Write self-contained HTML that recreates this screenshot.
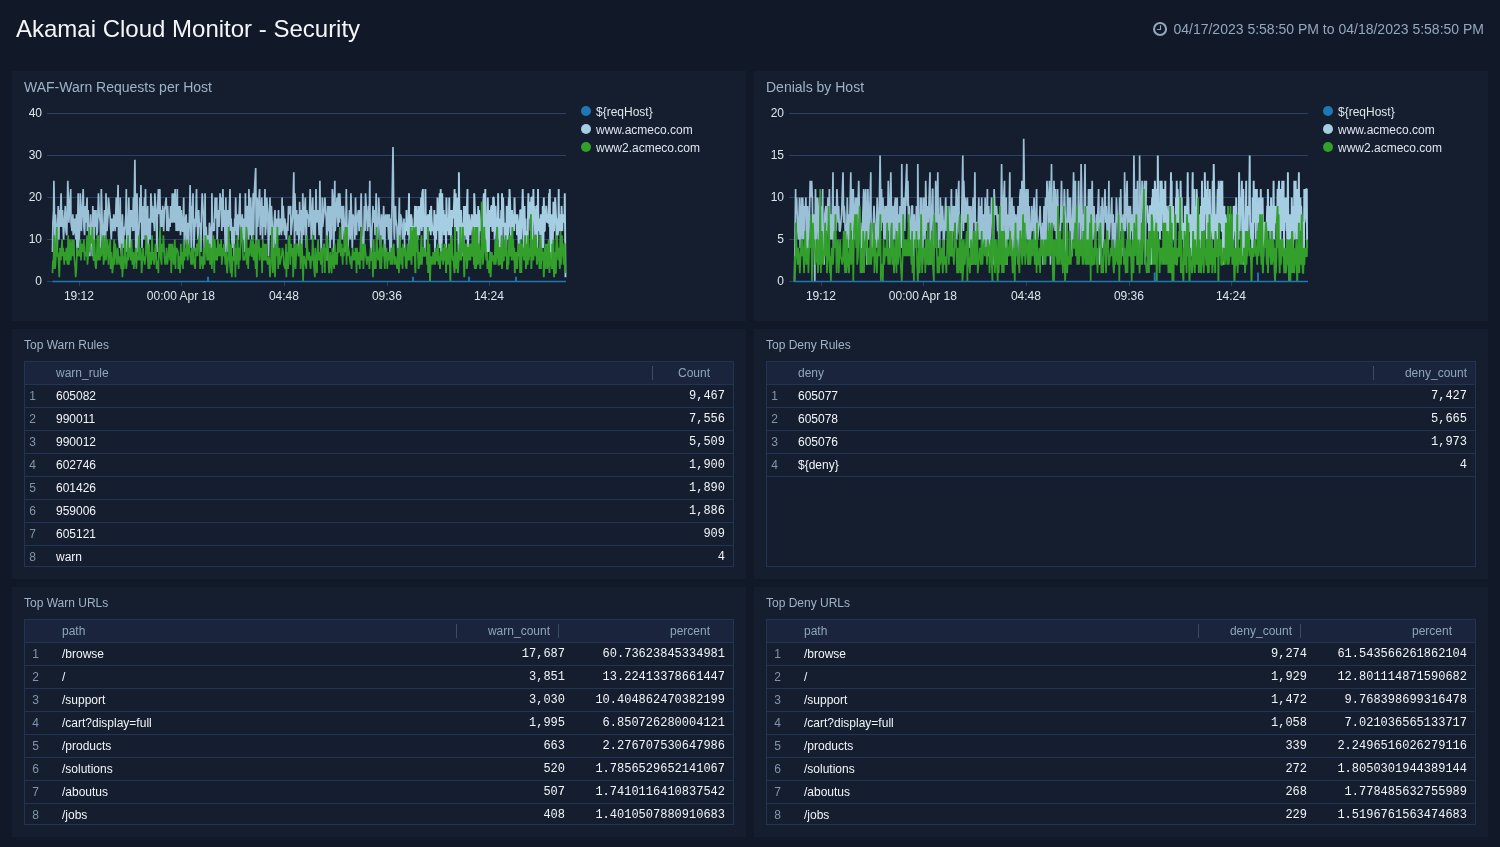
<!DOCTYPE html><html><head><meta charset="utf-8"><title>Akamai Cloud Monitor - Security</title><style>
*{box-sizing:border-box}
html,body{margin:0;padding:0}
body{width:1500px;height:847px;overflow:hidden;background:#111827;font-family:"Liberation Sans",sans-serif;position:relative;color:#f2f4f7}
#wrap{position:absolute;left:0;top:0;width:1500px;height:847px;will-change:transform}
.abs{position:absolute}
#title{left:16px;top:14px;font-size:24px;line-height:30px;color:#f4f6f9;white-space:nowrap}
#time{right:16px;top:20px;font-size:14px;line-height:18px;color:#93a7bd;white-space:nowrap}
#clock{left:1152px;top:21px}
.panel{position:absolute;background:#151e2f;width:734px;height:250px}
.pt{position:absolute;left:12px;white-space:nowrap;color:#9fb3c8}
.pt.big{top:8px;font-size:14px;line-height:16px}
.pt.sm{top:9px;font-size:12px;line-height:14px}
svg{position:absolute;left:0;top:0;overflow:visible}
svg text{font-family:"Liberation Sans",sans-serif;font-size:12px}
.tbl{position:absolute;left:12px;top:32px;width:710px;height:206px;border:1px solid #213456;overflow:hidden}
.row{position:absolute;left:0;width:708px;height:23px;border-bottom:1px solid #213456;font-size:12px;line-height:14px}
.row.h{background:#1a243c;color:#8fa5bd}
.row span{position:absolute;top:4px;white-space:nowrap}
.row .n{left:5px;color:#8095ac}
.row .m{font-family:"Liberation Mono","Liberation Sans",monospace;text-align:right}
.sep{position:absolute;top:4px;width:1px;height:14px;background:#3a4c69}
</style></head><body><div id="wrap"><div id="title" class="abs">Akamai Cloud Monitor - Security</div><svg id="clock" class="abs" width="16" height="16" viewBox="0 0 16 16" style="left:1152px;top:21px"><circle cx="8.05" cy="8" r="6" fill="none" stroke="#93a7bd" stroke-width="2.1"/><path d="M8.5 4.3V8.5H5" fill="none" stroke="#93a7bd" stroke-width="1.15"/></svg><div id="time" class="abs">04/17/2023 5:58:50 PM to 04/18/2023 5:58:50 PM</div><div class="panel" style="left:12px;top:71px"><div class="pt big">WAF-Warn Requests per Host</div><svg width="734" height="250" viewBox="12 71 734 250"><line x1="47" x2="566" y1="113.5" y2="113.5" stroke="#2c4064" stroke-width="1"/><text x="42" y="116.5" text-anchor="end" fill="#dfe5ec">40</text><line x1="47" x2="566" y1="155.5" y2="155.5" stroke="#2c4064" stroke-width="1"/><text x="42" y="158.5" text-anchor="end" fill="#dfe5ec">30</text><line x1="47" x2="566" y1="197.5" y2="197.5" stroke="#2c4064" stroke-width="1"/><text x="42" y="200.5" text-anchor="end" fill="#dfe5ec">20</text><line x1="47" x2="566" y1="239.5" y2="239.5" stroke="#2c4064" stroke-width="1"/><text x="42" y="242.5" text-anchor="end" fill="#dfe5ec">10</text><line x1="47" x2="566" y1="281.5" y2="281.5" stroke="#2c4064" stroke-width="1"/><text x="42" y="284.5" text-anchor="end" fill="#dfe5ec">0</text><line x1="79.5" x2="79.5" y1="281" y2="286" stroke="#2c4064" stroke-width="1"/><text x="78.9" y="300" text-anchor="middle" fill="#dfe5ec">19:12</text><line x1="181.5" x2="181.5" y1="281" y2="286" stroke="#2c4064" stroke-width="1"/><text x="180.9" y="300" text-anchor="middle" fill="#dfe5ec">00:00 Apr 18</text><line x1="284.5" x2="284.5" y1="281" y2="286" stroke="#2c4064" stroke-width="1"/><text x="283.9" y="300" text-anchor="middle" fill="#dfe5ec">04:48</text><line x1="387.5" x2="387.5" y1="281" y2="286" stroke="#2c4064" stroke-width="1"/><text x="386.9" y="300" text-anchor="middle" fill="#dfe5ec">09:36</text><line x1="489.5" x2="489.5" y1="281" y2="286" stroke="#2c4064" stroke-width="1"/><text x="488.9" y="300" text-anchor="middle" fill="#dfe5ec">14:24</text><path d="M52.5,252.1L52.9,222.7L53.6,210.1L53.9,180.7L55.0,247.9L55.4,214.3L56.8,235.3L57.1,256.3L58.2,205.9L58.9,239.5L59.3,210.1L60.0,226.9L61.1,193.3L61.8,226.9L62.5,210.1L63.6,239.5L63.9,231.1L65.3,205.9L66.0,231.1L66.8,235.3L67.1,218.5L67.8,180.7L68.9,222.7L69.6,205.9L70.7,189.1L71.0,222.7L72.1,231.1L72.8,214.3L73.2,235.3L74.6,218.5L75.0,231.1L76.0,239.5L76.4,214.3L77.1,256.3L78.2,193.3L78.9,247.9L80.0,218.5L80.3,193.3L81.4,231.1L81.7,222.7L83.2,189.1L83.9,226.9L84.6,235.3L85.3,205.9L85.7,222.7L87.1,197.5L87.4,231.1L88.1,210.1L89.2,239.5L89.9,256.3L90.6,214.3L91.4,235.3L92.4,256.3L92.8,205.9L93.9,260.5L94.2,210.1L94.9,226.9L96.0,210.1L96.7,235.3L97.4,231.1L98.5,193.3L99.2,214.3L100.3,222.7L100.6,247.9L101.3,189.1L102.1,218.5L103.1,252.1L104.2,218.5L104.5,210.1L105.6,247.9L106.0,193.3L107.0,231.1L108.1,214.3L108.5,197.5L109.5,210.1L110.3,218.5L110.6,226.9L111.3,239.5L112.0,218.5L113.1,231.1L113.8,214.3L114.9,226.9L115.2,231.1L116.3,197.5L116.7,226.9L118.1,184.9L118.5,235.3L119.5,247.9L120.2,197.5L120.9,247.9L121.7,256.3L122.4,214.3L123.1,247.9L124.2,226.9L124.5,235.3L125.9,214.3L126.3,189.1L127.0,252.1L128.1,226.9L128.8,197.5L129.9,256.3L130.6,210.1L130.9,226.9L131.6,210.1L132.7,231.1L133.4,197.5L133.8,231.1L134.9,159.7L135.9,260.5L136.3,235.3L137.0,193.3L137.7,252.1L139.1,226.9L139.8,197.5L140.6,222.7L140.9,184.9L142.0,247.9L143.1,205.9L143.8,239.5L144.5,197.5L144.8,235.3L145.5,189.1L146.3,239.5L147.7,205.9L148.0,256.3L148.8,222.7L149.5,218.5L150.2,239.5L150.9,193.3L152.3,222.7L152.7,205.9L153.4,214.3L154.5,231.1L154.8,193.3L156.2,214.3L157.0,252.1L157.3,218.5L158.4,189.1L159.1,214.3L159.8,189.1L160.5,226.9L161.2,210.1L161.9,226.9L162.7,205.9L163.7,231.1L164.4,210.1L165.2,205.9L166.2,197.5L166.9,231.1L167.6,205.9L168.7,231.1L169.1,218.5L170.1,226.9L170.5,205.9L171.6,222.7L172.3,193.3L172.6,222.7L174.1,193.3L174.4,222.7L175.1,189.1L176.2,231.1L177.3,189.1L177.6,231.1L178.7,205.9L179.4,231.1L180.1,205.9L180.5,235.3L181.2,210.1L182.3,231.1L183.0,231.1L183.7,197.5L184.4,247.9L185.5,218.5L186.2,214.3L186.9,247.9L187.6,222.7L188.3,252.1L189.4,218.5L190.1,184.9L191.2,247.9L191.9,205.9L192.2,214.3L193.0,193.3L193.7,252.1L195.1,218.5L195.5,226.9L196.5,189.1L196.9,210.1L198.0,239.5L198.7,210.1L199.4,226.9L200.1,222.7L200.8,252.1L201.5,214.3L202.2,193.3L203.3,214.3L204.4,252.1L205.1,193.3L205.4,235.3L206.2,226.9L207.2,256.3L207.9,235.3L209.0,247.9L209.4,222.7L210.4,231.1L211.5,260.5L211.9,193.3L212.6,231.1L213.3,222.7L214.3,231.1L215.1,197.5L215.4,218.5L216.8,197.5L217.2,239.5L217.9,210.1L219.0,226.9L220.1,193.3L220.8,210.1L221.1,197.5L221.8,231.1L222.9,189.1L223.6,226.9L224.3,210.1L225.4,252.1L225.8,197.5L226.5,226.9L227.5,252.1L227.9,210.1L228.6,231.1L230.0,189.1L230.7,231.1L231.1,218.5L232.2,247.9L233.2,226.9L234.0,260.5L234.7,218.5L235.0,231.1L235.7,197.5L236.5,235.3L237.9,214.3L238.2,239.5L239.3,210.1L240.0,193.3L240.4,222.7L241.4,235.3L242.2,214.3L242.9,239.5L243.6,218.5L244.7,252.1L245.4,193.3L246.1,252.1L246.8,210.1L247.5,205.9L248.6,239.5L248.9,189.1L250.4,235.3L250.7,197.5L251.8,239.5L252.1,231.1L253.2,193.3L253.6,235.3L254.3,193.3L255.7,168.1L256.4,260.5L257.1,197.5L257.8,226.9L258.6,205.9L259.6,189.1L260.3,235.3L260.7,218.5L261.8,197.5L262.5,239.5L263.2,205.9L264.3,226.9L265.0,189.1L265.3,235.3L266.0,226.9L266.8,197.5L267.8,214.3L268.5,256.3L269.6,210.1L270.0,197.5L270.7,235.3L271.4,205.9L272.5,231.1L273.2,260.5L274.2,222.7L275.0,210.1L275.7,247.9L276.7,218.5L277.1,226.9L277.8,235.3L278.5,210.1L279.2,235.3L280.3,218.5L281.4,235.3L282.1,197.5L282.4,231.1L283.2,205.9L284.6,235.3L284.9,218.5L285.6,231.1L286.4,239.5L287.4,222.7L287.8,231.1L288.5,205.9L289.6,214.3L290.6,205.9L291.0,235.3L292.1,222.7L292.8,214.3L293.8,172.3L294.6,252.1L294.9,193.3L296.0,231.1L296.7,210.1L297.1,235.3L298.1,214.3L299.2,252.1L299.6,201.7L300.3,231.1L301.0,210.1L301.7,247.9L302.8,193.3L303.8,235.3L304.5,214.3L305.3,197.5L306.3,247.9L306.7,210.1L307.8,218.5L308.5,214.3L308.8,226.9L309.5,214.3L310.2,189.1L311.3,239.5L312.4,205.9L312.7,197.5L313.5,235.3L314.5,210.1L315.2,239.5L316.0,189.1L316.7,222.7L317.4,218.5L318.1,210.1L319.2,235.3L319.9,180.7L320.6,235.3L321.3,252.1L322.4,197.5L322.7,226.9L324.2,210.1L324.9,197.5L325.6,210.1L326.3,218.5L327.0,260.5L327.7,205.9L328.8,231.1L329.1,205.9L330.2,247.9L330.9,205.9L331.6,239.5L332.4,189.1L333.4,205.9L333.8,252.1L334.8,180.7L335.2,231.1L336.3,210.1L337.0,197.5L338.1,226.9L338.4,193.3L339.5,222.7L339.8,193.3L340.9,218.5L341.6,205.9L342.3,239.5L343.4,205.9L344.1,218.5L344.8,252.1L345.9,222.7L346.3,189.1L347.0,226.9L348.0,247.9L348.4,235.3L349.5,210.1L350.2,239.5L350.9,193.3L351.6,218.5L352.3,247.9L353.0,214.3L354.5,222.7L354.8,239.5L355.5,197.5L356.6,235.3L356.9,222.7L358.4,210.1L359.1,231.1L359.8,210.1L360.2,226.9L361.2,193.3L361.9,235.3L363.0,247.9L363.4,260.5L364.4,205.9L365.1,231.1L365.5,193.3L366.9,218.5L367.6,231.1L368.4,205.9L369.1,226.9L369.8,180.7L370.1,222.7L371.2,260.5L371.9,231.1L373.0,205.9L373.3,222.7L374.4,210.1L375.1,235.3L376.2,193.3L376.6,226.9L377.6,239.5L378.0,226.9L378.7,197.5L380.1,231.1L380.5,252.1L381.5,214.3L381.9,226.9L382.6,239.5L383.7,205.9L384.8,260.5L385.1,222.7L385.8,214.3L386.9,226.9L387.6,214.3L388.7,239.5L389.4,214.3L390.1,256.3L390.8,218.5L391.2,252.1L391.9,214.3L393.0,147.1L394.0,231.1L394.4,239.5L395.5,205.9L395.8,218.5L396.9,226.9L397.9,256.3L398.7,226.9L399.4,197.5L399.7,256.3L400.4,214.3L401.5,218.5L402.6,239.5L402.9,231.1L404.0,218.5L404.7,247.9" fill="none" stroke="#a6cee3" stroke-width="1.7" stroke-opacity="0.93" stroke-linejoin="bevel"/><path d="M405.1,235.3L405.1,235.3L405.4,222.7L406.1,231.1L406.5,210.1L406.9,231.1L407.6,218.5L407.9,235.3L408.6,218.5L409.0,193.3L409.4,256.3L409.7,214.3L410.4,231.1L411.1,214.3L411.5,218.5L411.8,218.5L412.2,252.1L412.9,231.1L413.3,226.9L414.0,226.9L414.3,226.9L415.1,205.9L415.4,226.9L415.8,247.9L416.5,235.3L416.8,205.9L417.6,239.5L417.9,210.1L418.3,235.3L419.0,205.9L419.3,235.3L420.0,222.7L420.4,218.5L420.8,218.5L421.1,197.5L421.8,231.1L422.2,193.3L422.9,189.1L423.3,222.7L423.6,226.9L424.3,214.3L424.7,256.3L425.4,189.1L425.8,218.5L426.1,231.1L426.8,239.5L427.2,222.7L427.9,214.3L428.2,218.5L429.0,231.1L429.3,214.3L429.7,222.7L430.0,210.1L430.7,235.3L431.1,205.9L431.8,222.7L432.2,226.9L432.5,231.1L433.2,226.9L434.0,235.3L434.3,210.1L434.7,226.9L435.0,256.3L435.7,214.3L436.1,239.5L436.8,218.5L437.2,231.1L437.5,197.5L438.2,218.5L438.9,205.9L439.3,247.9L439.7,193.3L440.0,239.5L440.7,189.1L441.1,252.1L441.8,239.5L442.2,193.3L442.9,222.7L443.2,231.1L443.6,210.1L443.9,235.3L444.6,214.3L445.4,222.7L445.7,226.9L446.1,252.1L446.4,197.5L447.1,222.7L447.9,231.1L448.2,218.5L448.6,235.3L449.3,197.5L449.6,226.9L450.0,235.3L450.7,210.1L451.1,239.5L451.4,210.1L452.1,226.9L452.5,210.1L453.2,218.5L453.6,214.3L454.3,197.5L454.6,189.1L455.0,247.9L455.7,193.3L456.1,210.1L456.4,231.1L457.1,226.9L457.5,214.3L457.8,197.5L458.6,252.1L458.9,172.3L459.6,226.9L460.0,222.7L460.7,247.9L461.0,210.1L461.8,235.3L462.1,222.7L462.5,231.1L463.2,256.3L463.5,252.1L463.9,205.9L464.6,235.3L465.0,205.9L465.3,235.3L466.0,226.9L466.4,239.5L466.8,210.1L467.5,189.1L467.8,252.1L468.5,231.1L468.9,214.3L469.6,226.9L470.0,222.7L470.3,235.3L471.0,222.7L471.4,218.5L471.7,214.3L472.5,218.5L472.8,256.3L473.5,226.9L473.9,231.1L474.2,193.3L474.9,210.1L475.3,231.1L476.0,252.1L476.4,214.3L476.7,222.7L477.4,252.1L478.2,205.9L478.5,252.1L478.9,231.1L479.2,210.1L479.9,218.5L480.3,231.1L480.7,222.7L481.4,222.7L481.7,231.1L482.4,252.1L482.8,239.5L483.1,205.9L483.9,193.3L484.2,226.9L484.9,231.1L485.3,189.1L485.6,252.1L486.4,214.3L487.1,252.1L487.4,214.3L487.8,197.5L488.5,235.3L488.9,252.1L489.2,218.5L489.9,210.1L490.3,226.9L490.6,214.3L491.3,205.9L491.7,205.9L492.4,231.1L492.8,231.1L493.1,197.5L493.8,197.5L494.2,205.9L494.6,239.5L495.3,226.9L495.6,205.9L496.3,226.9L496.7,231.1L497.4,222.7L497.8,239.5L498.1,193.3L498.8,231.1L499.2,218.5L499.5,260.5L500.3,218.5L500.6,239.5L501.3,210.1L501.7,252.1L502.0,193.3L502.8,214.3L503.1,197.5L503.8,226.9L504.2,222.7L504.9,252.1L505.3,231.1L505.6,222.7L506.3,252.1L506.7,205.9L507.4,222.7L507.7,214.3L508.1,239.5L508.8,197.5L509.2,226.9L509.5,189.1L510.2,205.9L510.6,231.1L511.3,239.5L511.7,235.3L512.0,210.1L512.7,222.7L513.1,214.3L513.5,226.9L514.2,231.1L514.5,197.5L515.2,222.7L515.6,222.7L515.9,214.3L516.7,222.7L517.0,235.3L517.4,214.3L518.1,222.7L518.8,256.3L519.2,247.9L519.5,239.5L520.2,210.1L520.6,210.1L520.9,239.5L521.7,222.7L522.0,218.5L522.7,189.1L523.1,205.9L523.8,256.3L524.1,226.9L524.5,205.9L525.2,256.3L525.6,218.5L525.9,256.3L526.6,231.1L527.0,239.5L527.7,247.9L528.1,205.9L528.4,193.3L528.8,218.5L529.5,201.7L530.2,214.3L530.6,231.1L530.9,218.5L531.3,197.5L532.0,197.5L532.3,247.9L533.1,210.1L533.4,189.1L533.8,214.3L534.5,205.9L535.2,239.5L535.6,231.1L535.9,239.5L536.6,205.9L537.0,205.9L537.3,247.9L538.0,189.1L538.4,222.7L538.8,231.1L539.5,218.5L540.2,235.3L540.5,226.9L540.9,214.3L541.6,231.1L542.0,218.5L542.3,247.9L542.7,205.9L543.4,247.9L543.8,197.5L544.5,231.1L544.8,231.1L545.2,210.1L545.9,214.3L546.2,205.9L547.0,222.7L547.3,214.3L548.0,222.7L548.4,222.7L549.1,193.3L549.5,226.9L549.8,189.1L550.2,239.5L550.9,260.5L551.6,214.3L552.0,239.5L552.3,231.1L552.7,252.1L553.4,201.7L553.7,226.9L554.1,231.1L554.8,210.1L555.2,197.5L555.9,214.3L556.2,218.5L556.6,239.5L557.3,218.5L557.7,235.3L558.4,226.9L558.7,189.1L559.1,231.1L559.8,214.3L560.5,226.9L560.9,231.1L561.2,226.9L561.6,205.9L562.3,231.1L562.6,218.5L563.4,218.5L563.7,214.3L564.4,222.7L564.8,193.3L565.5,277.3" fill="none" stroke="#a6cee3" stroke-width="1.9" stroke-opacity="1.0" stroke-linejoin="bevel"/><path d="M52.5,273.1L52.9,260.5L53.2,268.9L54.3,235.3L55.0,268.9L55.7,260.5L56.8,226.9L57.1,256.3L57.8,252.1L58.6,260.5L59.3,277.3L60.0,247.9L60.7,260.5L62.1,239.5L62.5,256.3L63.2,247.9L64.3,264.7L64.6,252.1L65.7,260.5L66.4,247.9L67.5,264.7L68.2,235.3L68.9,264.7L70.0,239.5L70.7,260.5L71.4,252.1L72.1,239.5L72.5,256.3L73.9,239.5L74.2,256.3L75.3,268.9L75.7,277.3L76.4,268.9L77.1,247.9L77.8,252.1L79.2,256.3L79.6,247.9L80.3,239.5L81.0,260.5L81.7,243.7L82.8,252.1L83.9,239.5L84.6,260.5L84.9,252.1L86.0,256.3L87.1,235.3L87.4,264.7L88.5,252.1L89.2,226.9L89.6,252.1L90.3,235.3L91.7,243.7L92.4,226.9L93.1,252.1L93.5,260.5L94.6,239.5L95.3,264.7L96.0,268.9L96.7,256.3L97.4,235.3L98.1,260.5L98.8,235.3L99.9,260.5L100.6,247.9L101.3,256.3L102.4,247.9L103.1,235.3L103.5,264.7L104.5,256.3L105.3,235.3L106.0,260.5L106.7,247.9L107.4,239.5L108.5,264.7L109.2,247.9L110.3,239.5L110.6,268.9L111.3,252.1L112.4,273.1L113.1,264.7L114.2,239.5L114.5,264.7L115.2,243.7L116.0,252.1L117.0,264.7L117.7,247.9L118.8,260.5L119.2,264.7L119.9,256.3L121.3,268.9L121.7,243.7L122.4,277.3L123.4,256.3L123.8,268.9L124.9,239.5L125.6,260.5L126.3,268.9L127.4,256.3L128.1,235.3L128.4,260.5L129.5,247.9L130.6,256.3L130.9,260.5L131.6,239.5L132.4,264.7L133.4,252.1L133.8,268.9L134.9,256.3L135.9,247.9L136.3,268.9L137.0,256.3L137.7,260.5L139.1,235.3L139.5,260.5L140.6,247.9L141.3,260.5L141.6,273.1L143.1,247.9L143.4,260.5L144.1,256.3L144.8,264.7L145.5,256.3L146.3,235.3L147.3,252.1L148.4,268.9L149.1,243.7L149.5,268.9L150.5,252.1L151.2,264.7L152.0,235.3L153.0,260.5L153.4,252.1L154.1,264.7L155.5,243.7L155.9,247.9L156.6,268.9L157.7,260.5L158.4,273.1L158.7,256.3L160.2,226.9L160.5,256.3L161.6,264.7L161.9,243.7L163.0,252.1L163.4,235.3L164.4,256.3L165.2,264.7L166.2,256.3L166.6,247.9L167.3,264.7L168.7,252.1L169.1,243.7L170.1,260.5L170.9,243.7L171.2,273.1L172.3,243.7L173.4,260.5L173.7,264.7L174.8,239.5L175.5,268.9L175.8,256.3L176.6,247.9L178.0,252.1L178.3,268.9L179.4,256.3L180.1,273.1L180.8,243.7L181.6,264.7L182.6,252.1L183.0,268.9L183.7,239.5L184.4,260.5L185.1,247.9L186.2,256.3L187.3,239.5L187.6,260.5L188.3,252.1L189.4,243.7L189.8,252.1L191.2,264.7L191.9,247.9L192.2,264.7L193.3,247.9L193.7,260.5L195.1,268.9L195.8,247.9L196.5,256.3L196.9,243.7L197.6,256.3L198.3,243.7L199.4,235.3L200.1,268.9L200.8,260.5L201.5,256.3L202.9,268.9L203.7,247.9L204.0,260.5L204.7,264.7L205.4,235.3L206.5,247.9L207.2,260.5L207.9,239.5L208.6,260.5L209.7,243.7L210.1,264.7L211.1,247.9L211.9,268.9L212.6,247.9L213.3,235.3L214.3,273.1L214.7,239.5L215.8,260.5L216.5,247.9L217.2,260.5L217.9,239.5L219.0,256.3L220.1,243.7L220.8,256.3L221.1,239.5L221.8,264.7L222.9,247.9L223.3,256.3L224.0,243.7L225.4,264.7L226.1,252.1L226.8,268.9L227.2,273.1L228.3,252.1L228.6,226.9L229.7,260.5L230.7,273.1L231.1,243.7L231.8,277.3L232.9,256.3L234.0,260.5L234.7,243.7L235.4,277.3L235.7,247.9L236.5,264.7L237.5,235.3L238.6,268.9L239.3,247.9L240.0,260.5L240.4,247.9L241.1,226.9L242.5,243.7L243.2,260.5L243.6,256.3L244.7,260.5L245.4,252.1L246.4,226.9L246.8,264.7L247.5,247.9L248.2,268.9L248.9,247.9L249.6,256.3L250.7,239.5L251.8,256.3L252.1,256.3L252.9,235.3L253.6,260.5L254.3,243.7L255.7,268.9L256.1,239.5L256.8,277.3L257.5,252.1L258.9,239.5L259.6,260.5L260.3,247.9L260.7,252.1L261.4,247.9L262.1,273.1L262.8,239.5L263.9,260.5L264.6,243.7L265.3,260.5L266.0,243.7L267.1,260.5L267.8,264.7L268.9,256.3L269.3,260.5L270.0,277.3L271.0,260.5L272.1,226.9L272.8,273.1L273.2,264.7L273.9,247.9L275.0,277.3L276.0,243.7L276.4,256.3L277.4,226.9L278.2,268.9L278.5,252.1L279.6,247.9L279.9,264.7L281.4,256.3L281.7,256.3L282.4,247.9L283.2,252.1L283.9,264.7L285.3,268.9L286.0,243.7L286.4,277.3L287.1,252.1L288.1,268.9L288.5,239.5L289.6,235.3L290.3,264.7L291.0,243.7L291.7,256.3L292.8,247.9L293.1,277.3L294.6,243.7L294.9,260.5L295.6,268.9L296.3,252.1L297.1,243.7L298.5,256.3L299.2,252.1L299.9,239.5L300.6,268.9L301.0,256.3L302.0,243.7L303.1,281.5L303.8,256.3L304.2,256.3L304.9,260.5L306.3,268.9L307.0,235.3L307.4,247.9L308.5,260.5L309.2,252.1L309.5,256.3L310.6,268.9L311.3,256.3L312.0,260.5L312.7,235.3L313.5,260.5L314.9,277.3L315.2,247.9L316.0,260.5L317.0,273.1L317.4,252.1L318.1,239.5L318.8,260.5L319.9,252.1L320.9,264.7L321.7,247.9L322.4,273.1L322.7,252.1L324.2,243.7L324.9,273.1L325.2,247.9L326.3,260.5L326.6,235.3L328.1,247.9L328.4,260.5L329.1,273.1L330.2,252.1L330.6,260.5L331.6,273.1L332.4,247.9L333.1,260.5L334.1,268.9L334.8,243.7L335.2,264.7L336.3,252.1L337.0,264.7L338.1,239.5L338.8,252.1L339.1,252.1L339.8,226.9L340.9,256.3L341.6,243.7L342.7,264.7L343.0,247.9L343.8,256.3L344.5,239.5L345.5,226.9L346.6,264.7L347.0,226.9L347.7,256.3L348.4,247.9L349.1,252.1L350.5,264.7L350.9,256.3L351.6,268.9L352.7,247.9L353.4,260.5L354.1,252.1L355.2,260.5L355.5,247.9L356.6,273.1L356.9,247.9L358.0,264.7L359.1,252.1L359.8,268.9L360.2,252.1L361.2,226.9L361.6,260.5L363.0,243.7L363.4,268.9L364.1,247.9L364.8,243.7L365.5,252.1L366.9,264.7L367.3,256.3L368.0,260.5L368.7,256.3L369.4,268.9L370.5,247.9L371.6,260.5L372.3,252.1L373.0,277.3L373.7,239.5L374.4,268.9L375.5,252.1L375.8,268.9L376.6,226.9L377.3,252.1L378.0,260.5L379.4,247.9L380.1,268.9L380.8,235.3L381.2,268.9L382.3,247.9L382.6,256.3L383.7,243.7L384.8,268.9L385.5,252.1L385.8,260.5L386.5,247.9L387.3,268.9L388.3,252.1L389.4,260.5L389.7,252.1L390.5,264.7L391.2,247.9L392.2,264.7L393.0,247.9L393.7,243.7L394.4,264.7L395.5,256.3L395.8,260.5L397.2,268.9L397.9,247.9L398.3,260.5L399.0,273.1L399.7,235.3L401.2,264.7L401.9,247.9L402.6,268.9L402.9,243.7L404.0,256.3L405.1,247.9" fill="none" stroke="#33a02c" stroke-width="1.7" stroke-opacity="0.99" stroke-linejoin="bevel"/><path d="M405.1,247.9L405.1,247.9L405.4,256.3L405.8,264.7L406.5,268.9L406.9,260.5L407.6,243.7L407.9,260.5L408.6,247.9L409.0,247.9L409.4,260.5L410.1,239.5L410.4,252.1L410.8,226.9L411.5,264.7L411.8,243.7L412.2,231.1L412.9,256.3L413.3,226.9L414.0,235.3L414.3,235.3L415.1,264.7L415.4,273.1L415.8,226.9L416.5,247.9L416.8,252.1L417.2,235.3L417.9,252.1L418.3,260.5L418.6,268.9L419.3,260.5L419.7,252.1L420.4,264.7L420.8,252.1L421.5,235.3L421.8,264.7L422.2,256.3L422.9,247.9L423.3,247.9L424.0,256.3L424.3,247.9L424.7,252.1L425.4,256.3L425.8,252.1L426.1,256.3L426.8,252.1L427.2,264.7L427.9,226.9L428.2,273.1L428.6,252.1L429.3,243.7L429.7,260.5L430.0,281.5L430.7,256.3L431.1,264.7L431.8,260.5L432.2,256.3L432.9,264.7L433.2,252.1L434.0,256.3L434.3,256.3L434.7,252.1L435.0,264.7L435.7,247.9L436.1,256.3L436.8,260.5L437.2,260.5L437.5,252.1L438.2,243.7L438.6,264.7L439.3,260.5L439.7,256.3L440.0,268.9L440.7,252.1L441.1,252.1L441.8,256.3L442.2,260.5L442.5,243.7L443.2,264.7L443.6,247.9L443.9,256.3L444.6,260.5L445.0,243.7L445.7,252.1L446.1,273.1L446.4,247.9L447.1,256.3L447.9,264.7L448.2,260.5L448.6,247.9L448.9,243.7L449.6,252.1L450.4,281.5L450.7,247.9L451.1,239.5L451.8,235.3L452.1,252.1L452.8,260.5L453.2,260.5L453.6,256.3L453.9,264.7L454.6,273.1L455.0,226.9L455.3,247.9L456.1,268.9L456.8,252.1L457.1,268.9L457.5,252.1L457.8,273.1L458.6,260.5L458.9,256.3L459.6,243.7L460.0,260.5L460.3,226.9L461.0,260.5L461.8,243.7L462.1,252.1L462.5,247.9L462.8,226.9L463.5,247.9L464.3,277.3L464.6,256.3L465.0,260.5L465.3,243.7L466.0,247.9L466.4,243.7L466.8,268.9L467.5,260.5L467.8,247.9L468.5,247.9L468.9,260.5L469.6,243.7L470.0,247.9L470.3,260.5L471.0,247.9L471.4,243.7L471.7,252.1L472.5,256.3L472.8,235.3L473.5,226.9L473.9,264.7L474.2,256.3L474.9,268.9L475.7,226.9L476.0,268.9L476.4,252.1L476.7,256.3L477.4,226.9L477.8,264.7L478.5,260.5L478.9,243.7L479.6,252.1L479.9,256.3L480.3,268.9L480.7,256.3L481.4,252.1L481.7,201.7L482.4,247.9L482.8,264.7L483.5,256.3L483.9,247.9L484.2,226.9L484.9,247.9L485.3,239.5L486.0,256.3L486.4,260.5L487.1,252.1L487.4,268.9L487.8,260.5L488.1,268.9L488.9,264.7L489.2,273.1L489.9,252.1L490.3,252.1L490.6,277.3L491.3,260.5L491.7,252.1L492.4,260.5L492.8,260.5L493.1,256.3L493.8,256.3L494.2,264.7L494.9,256.3L495.3,239.5L495.6,264.7L496.3,256.3L496.7,247.9L497.1,226.9L497.8,252.1L498.5,264.7L498.8,264.7L499.2,264.7L499.5,247.9L500.3,247.9L501.0,264.7L501.3,247.9L501.7,235.3L502.0,268.9L502.8,247.9L503.5,260.5L503.8,260.5L504.2,239.5L504.9,256.3L505.3,252.1L505.6,235.3L506.0,247.9L506.7,252.1L507.0,268.9L507.7,268.9L508.1,256.3L508.5,264.7L509.2,235.3L509.5,252.1L510.2,252.1L510.6,256.3L511.3,235.3L511.7,260.5L512.4,226.9L512.7,243.7L513.1,239.5L513.8,260.5L514.2,247.9L514.9,273.1L515.2,252.1L515.6,256.3L516.3,260.5L516.7,252.1L517.0,268.9L517.7,256.3L518.1,247.9L518.8,243.7L519.2,252.1L519.5,243.7L520.2,273.1L520.6,239.5L521.3,273.1L521.7,252.1L522.0,243.7L522.4,252.1L523.1,256.3L523.4,247.9L524.1,260.5L524.5,247.9L525.2,235.3L525.6,247.9L525.9,268.9L526.6,252.1L527.0,243.7L527.7,264.7L528.1,235.3L528.4,247.9L528.8,260.5L529.5,247.9L529.9,256.3L530.6,247.9L530.9,214.3L531.3,268.9L532.0,247.9L532.3,239.5L533.1,243.7L533.4,260.5L533.8,235.3L534.5,256.3L535.2,243.7L535.6,235.3L535.9,235.3L536.6,256.3L537.0,264.7L537.3,256.3L538.0,247.9L538.4,260.5L538.8,247.9L539.5,268.9L540.2,235.3L540.5,256.3L540.9,268.9L541.6,247.9L542.0,252.1L542.3,252.1L542.7,260.5L543.4,252.1L543.8,277.3L544.5,252.1L544.8,247.9L545.2,268.9L545.9,243.7L546.2,256.3L547.0,243.7L547.3,268.9L547.7,260.5L548.4,252.1L548.7,239.5L549.5,273.1L549.8,252.1L550.2,260.5L550.9,264.7L551.2,260.5L552.0,268.9L552.3,243.7L553.0,252.1L553.4,239.5L553.7,260.5L554.1,277.3L554.8,252.1L555.2,273.1L555.9,273.1L556.2,247.9L556.6,235.3L557.3,243.7L558.0,256.3L558.4,260.5L558.7,256.3L559.1,247.9L559.8,268.9L560.5,231.1L560.9,264.7L561.2,256.3L561.9,235.3L562.3,256.3L562.6,247.9L563.4,256.3L563.7,264.7L564.1,243.7L564.8,243.7L565.1,273.1" fill="none" stroke="#33a02c" stroke-width="1.9" stroke-opacity="1.0" stroke-linejoin="bevel"/><path d="M52.5,281.5L207.7,281.5L207.7,277.3L208.3,277.3L208.3,281.5L412.7,281.5L412.7,277.3L413.3,277.3L413.3,281.5L468.7,281.5L468.7,277.3L469.3,277.3L469.3,281.5L515.7,281.5L515.7,277.3L516.3,277.3L516.3,281.5L566.0,281.5" fill="none" stroke="#1f78b4" stroke-width="1.3" stroke-linejoin="miter"/><circle cx="586" cy="111" r="5" fill="#1f78b4"/><text x="596" y="116" fill="#dfe5ec">${reqHost}</text><circle cx="586" cy="129" r="5" fill="#a6cee3"/><text x="596" y="134" fill="#dfe5ec">www.acmeco.com</text><circle cx="586" cy="147" r="5" fill="#33a02c"/><text x="596" y="152" fill="#dfe5ec">www2.acmeco.com</text></svg></div><div class="panel" style="left:754px;top:71px"><div class="pt big">Denials by Host</div><svg width="734" height="250" viewBox="754 71 734 250"><line x1="789" x2="1308" y1="113.5" y2="113.5" stroke="#2c4064" stroke-width="1"/><text x="784" y="116.5" text-anchor="end" fill="#dfe5ec">20</text><line x1="789" x2="1308" y1="155.5" y2="155.5" stroke="#2c4064" stroke-width="1"/><text x="784" y="158.5" text-anchor="end" fill="#dfe5ec">15</text><line x1="789" x2="1308" y1="197.5" y2="197.5" stroke="#2c4064" stroke-width="1"/><text x="784" y="200.5" text-anchor="end" fill="#dfe5ec">10</text><line x1="789" x2="1308" y1="239.5" y2="239.5" stroke="#2c4064" stroke-width="1"/><text x="784" y="242.5" text-anchor="end" fill="#dfe5ec">5</text><line x1="789" x2="1308" y1="281.5" y2="281.5" stroke="#2c4064" stroke-width="1"/><text x="784" y="284.5" text-anchor="end" fill="#dfe5ec">0</text><line x1="821.5" x2="821.5" y1="281" y2="286" stroke="#2c4064" stroke-width="1"/><text x="820.9" y="300" text-anchor="middle" fill="#dfe5ec">19:12</text><line x1="923.5" x2="923.5" y1="281" y2="286" stroke="#2c4064" stroke-width="1"/><text x="922.9" y="300" text-anchor="middle" fill="#dfe5ec">00:00 Apr 18</text><line x1="1026.5" x2="1026.5" y1="281" y2="286" stroke="#2c4064" stroke-width="1"/><text x="1025.9" y="300" text-anchor="middle" fill="#dfe5ec">04:48</text><line x1="1129.5" x2="1129.5" y1="281" y2="286" stroke="#2c4064" stroke-width="1"/><text x="1128.9" y="300" text-anchor="middle" fill="#dfe5ec">09:36</text><line x1="1231.5" x2="1231.5" y1="281" y2="286" stroke="#2c4064" stroke-width="1"/><text x="1230.9" y="300" text-anchor="middle" fill="#dfe5ec">14:24</text><path d="M794.5,281.5L794.9,247.9L795.6,189.1L795.9,214.3L796.6,197.5L797.4,222.7L798.4,239.5L799.5,197.5L800.2,247.9L800.6,231.1L801.6,197.5L802.3,239.5L802.7,197.5L804.1,239.5L804.5,205.9L805.2,214.3L805.9,197.5L806.6,256.3L807.7,205.9L808.4,247.9L809.1,231.1L810.2,180.7L810.5,197.5L811.6,180.7L812.3,197.5L813.0,247.9L813.8,214.3L814.8,281.5L815.5,189.1L816.2,239.5L817.3,197.5L818.0,214.3L818.4,264.7L819.5,197.5L820.5,247.9L820.9,205.9L821.6,239.5L822.7,189.1L823.0,247.9L824.1,264.7L824.8,214.3L825.9,205.9L826.2,239.5L826.9,231.1L828.0,197.5L828.7,222.7L829.4,189.1L830.1,239.5L830.9,214.3L831.9,239.5L833.0,172.3L833.4,247.9L834.4,205.9L835.1,239.5L835.5,205.9L836.2,231.1L836.9,189.1L838.3,222.7L838.7,205.9L839.4,231.1L840.1,231.1L841.6,214.3L841.9,205.9L843.0,172.3L843.7,222.7L844.1,205.9L844.8,214.3L845.5,247.9L846.9,222.7L847.3,197.5L848.3,247.9L848.7,214.3L849.4,239.5L850.8,172.3L851.5,231.1L852.3,189.1L852.6,256.3L853.3,189.1L854.0,239.5L855.5,197.5L856.2,231.1L856.9,197.5L857.6,239.5L858.0,205.9L858.7,180.7L860.1,239.5L860.5,222.7L861.2,239.5L861.9,264.7L862.6,222.7L863.7,189.1L864.4,256.3L865.1,197.5L865.8,189.1L866.9,264.7L867.9,189.1L868.7,239.5L869.4,214.3L869.7,214.3L870.8,172.3L871.1,231.1L872.6,256.3L873.3,222.7L874.0,205.9L874.4,214.3L875.1,231.1L876.1,247.9L877.2,197.5L877.9,222.7L878.3,247.9L879.0,231.1L880.1,155.5L881.1,231.1L881.5,189.1L882.2,222.7L882.9,197.5L884.0,239.5L885.1,205.9L885.4,239.5L886.1,222.7L886.8,205.9L887.5,231.1L888.3,180.7L889.7,247.9L890.0,222.7L890.8,172.3L891.5,214.3L892.5,256.3L892.9,205.9L894.0,239.5L894.7,205.9L895.4,197.5L896.5,256.3L897.2,197.5L898.2,239.5L899.0,214.3L899.3,256.3L900.0,205.9L901.1,247.9L901.8,163.9L902.5,239.5L903.2,231.1L903.9,197.5L904.7,231.1L905.4,197.5L906.8,163.9L907.2,205.9L907.9,180.7L908.6,222.7L909.3,205.9L910.7,247.9L911.1,239.5L911.8,205.9L912.5,205.9L913.2,256.3L914.3,214.3L914.6,239.5L915.7,247.9L916.4,205.9L917.5,239.5L917.8,163.9L918.6,247.9L920.0,222.7L920.3,197.5L921.1,231.1L921.8,197.5L922.5,264.7L923.9,197.5L924.3,214.3L925.0,239.5L925.7,180.7L926.8,231.1L927.5,205.9L928.2,222.7L928.9,205.9L930.0,172.3L930.3,264.7L931.0,231.1L932.5,189.1L932.8,189.1L933.5,256.3L934.6,214.3L935.3,222.7L935.7,180.7L937.1,222.7L937.8,172.3L938.5,247.9L939.2,214.3L939.6,247.9L940.3,197.5L941.4,231.1L942.4,205.9L943.2,222.7L943.5,256.3L944.9,222.7L945.7,197.5L946.4,231.1L947.1,214.3L947.4,205.9L948.5,247.9L948.9,205.9L950.3,256.3L950.6,231.1L951.4,189.1L952.1,256.3L953.1,205.9L954.2,231.1L954.9,205.9L955.6,222.7L956.3,189.1L956.7,239.5L957.4,214.3L958.8,180.7L959.2,231.1L960.3,239.5L960.6,222.7L961.3,239.5L962.8,155.5L963.5,231.1L963.8,180.7L964.9,222.7L965.3,197.5L966.0,222.7L967.4,197.5L967.8,214.3L968.5,231.1L969.2,205.9L969.9,247.9L971.0,205.9L971.7,264.7L972.7,214.3L973.1,197.5L974.2,222.7L974.9,172.3L975.6,264.7L976.3,222.7L977.0,222.7L978.1,231.1L978.8,197.5L979.2,239.5L980.2,205.9L980.9,239.5L981.7,197.5L982.7,247.9L983.4,214.3L984.2,247.9L985.2,197.5L985.9,247.9L986.7,222.7L987.4,189.1L988.1,256.3L988.8,205.9L989.9,247.9L990.6,214.3L990.9,222.7L991.6,197.5L992.7,247.9L993.4,264.7L994.1,189.1L995.2,214.3L995.6,214.3L996.6,205.9L997.7,231.1L998.1,214.3L998.8,239.5L999.5,214.3L1000.6,239.5L1001.6,163.9L1002.3,214.3L1002.7,256.3L1003.4,205.9L1004.5,180.7L1005.2,264.7L1006.3,197.5L1007.0,264.7L1007.3,214.3L1008.0,239.5L1009.1,214.3L1009.8,172.3L1010.5,247.9L1011.3,214.3L1012.0,197.5L1012.7,256.3L1013.7,205.9L1014.8,222.7L1015.2,264.7L1015.9,214.3L1017.0,247.9L1018.0,205.9L1018.4,214.3L1019.4,256.3L1019.8,197.5L1020.5,189.1L1021.2,239.5L1021.9,180.7L1023.0,247.9L1023.7,138.7L1024.8,222.7L1025.2,239.5L1026.2,189.1L1027.3,239.5L1028.0,189.1L1028.7,264.7L1029.1,205.9L1029.8,247.9L1030.9,231.1L1031.6,205.9L1032.6,231.1L1033.0,222.7L1034.1,197.5L1034.8,247.9L1035.8,222.7L1036.6,189.1L1036.9,214.3L1037.6,239.5L1038.3,231.1L1039.8,214.3L1040.1,205.9L1040.8,231.1L1041.6,247.9L1042.6,222.7L1043.0,264.7L1044.0,205.9L1044.8,247.9L1045.5,197.5L1046.2,247.9L1046.9,180.7L1048.3,205.9L1048.7,239.5L1049.4,180.7L1050.5,264.7L1050.8,222.7L1051.5,163.9L1052.2,231.1L1053.3,222.7L1054.0,180.7L1055.1,231.1L1055.5,189.1L1056.5,239.5L1057.6,189.1L1058.3,222.7L1058.7,231.1L1059.4,256.3L1060.4,231.1L1061.5,180.7L1062.2,222.7L1062.6,205.9L1063.7,214.3L1064.4,189.1L1065.4,222.7L1065.8,247.9L1066.5,256.3L1067.6,189.1L1068.3,222.7L1068.6,197.5L1070.1,231.1L1070.4,197.5L1071.5,239.5L1072.2,256.3L1072.6,222.7L1073.6,172.3L1074.4,239.5L1075.4,180.7L1075.8,231.1L1076.5,222.7L1077.6,247.9L1078.6,180.7L1079.3,222.7L1080.1,205.9L1080.4,247.9L1081.1,163.9L1082.6,239.5L1083.3,214.3L1083.6,247.9L1084.3,205.9L1085.0,163.9L1085.8,247.9L1086.8,205.9L1087.5,256.3L1088.6,189.1L1089.3,247.9L1090.0,231.1L1090.4,189.1L1091.5,247.9L1092.2,180.7L1092.9,239.5L1094.0,205.9L1094.3,222.7L1095.4,239.5L1096.5,214.3L1097.2,231.1L1097.5,222.7L1098.6,189.1L1098.9,205.9L1099.7,264.7L1101.1,205.9L1101.4,256.3L1102.2,197.5L1102.9,247.9L1103.9,214.3L1105.0,189.1L1105.7,222.7L1106.4,205.9L1107.1,231.1L1107.9,247.9L1108.9,180.7L1109.3,239.5L1110.4,214.3L1110.7,222.7L1111.8,197.5L1112.5,256.3L1113.2,214.3L1113.9,239.5L1114.6,222.7L1115.3,256.3L1116.4,197.5L1117.5,222.7L1117.8,214.3L1118.9,256.3L1119.6,197.5L1120.3,231.1L1120.7,189.1L1121.8,256.3L1122.5,222.7L1123.2,214.3L1124.3,231.1L1124.6,172.3L1125.3,231.1L1126.8,189.1L1127.1,180.7L1127.8,239.5L1128.5,205.9L1130.0,256.3L1130.3,205.9L1131.4,231.1L1132.1,214.3L1132.5,231.1L1133.2,256.3L1133.9,155.5L1135.3,247.9L1136.0,189.1L1136.7,239.5L1137.5,180.7L1137.8,264.7L1139.2,231.1L1139.6,155.5L1140.7,256.3L1141.0,231.1L1142.1,180.7L1143.2,205.9L1143.5,222.7L1144.6,180.7L1145.3,264.7L1145.7,222.7L1146.4,180.7" fill="none" stroke="#a6cee3" stroke-width="1.7" stroke-opacity="0.93" stroke-linejoin="bevel"/><path d="M1147.1,205.9L1147.1,205.9L1147.4,205.9L1148.1,222.7L1148.5,222.7L1148.9,214.3L1149.2,256.3L1149.9,205.9L1150.3,205.9L1151.0,264.7L1151.4,222.7L1152.1,197.5L1152.4,239.5L1152.8,189.1L1153.5,205.9L1153.8,239.5L1154.2,214.3L1154.9,180.7L1155.6,197.5L1156.0,205.9L1156.3,256.3L1156.7,189.1L1157.4,231.1L1157.8,155.5L1158.5,231.1L1158.8,231.1L1159.6,214.3L1159.9,239.5L1160.3,180.7L1160.6,222.7L1161.3,231.1L1161.7,180.7L1162.4,214.3L1162.8,205.9L1163.1,189.1L1163.8,239.5L1164.2,189.1L1164.9,222.7L1165.3,180.7L1165.6,222.7L1166.3,239.5L1166.7,205.9L1167.4,214.3L1167.8,222.7L1168.1,247.9L1168.8,231.1L1169.2,205.9L1169.9,205.9L1170.2,222.7L1171.0,172.3L1171.3,231.1L1171.7,180.7L1172.0,239.5L1172.7,222.7L1173.1,205.9L1173.8,239.5L1174.2,222.7L1174.5,239.5L1175.2,247.9L1176.0,197.5L1176.3,222.7L1176.7,180.7L1177.4,222.7L1177.7,189.1L1178.4,222.7L1178.8,197.5L1179.2,205.9L1179.9,231.1L1180.2,214.3L1180.6,180.7L1181.3,222.7L1181.7,197.5L1182.0,231.1L1182.7,239.5L1183.1,231.1L1183.8,222.7L1184.2,264.7L1184.9,205.9L1185.2,214.3L1185.6,205.9L1185.9,264.7L1186.6,222.7L1187.4,197.5L1187.7,172.3L1188.1,214.3L1188.4,197.5L1189.1,231.1L1189.5,231.1L1190.2,222.7L1190.6,214.3L1190.9,247.9L1191.6,256.3L1192.4,189.1L1192.7,172.3L1193.1,256.3L1193.4,205.9L1194.1,189.1L1194.5,247.9L1195.2,205.9L1195.6,247.9L1195.9,231.1L1196.6,189.1L1197.0,197.5L1197.3,256.3L1198.1,247.9L1198.4,231.1L1199.1,247.9L1199.5,214.3L1200.2,256.3L1200.6,239.5L1200.9,205.9L1201.6,231.1L1202.0,180.7L1202.3,222.7L1203.0,197.5L1203.4,256.3L1204.1,247.9L1204.5,231.1L1204.8,172.3L1205.5,214.3L1205.9,205.9L1206.6,189.1L1207.0,239.5L1207.7,180.7L1208.0,231.1L1208.4,231.1L1208.8,197.5L1209.5,247.9L1209.8,189.1L1210.5,239.5L1210.9,231.1L1211.2,214.3L1212.0,231.1L1212.7,180.7L1213.0,239.5L1213.4,214.3L1213.7,163.9L1214.5,205.9L1215.2,239.5L1215.5,256.3L1215.9,239.5L1216.6,214.3L1216.9,222.7L1217.7,189.1L1218.0,239.5L1218.4,214.3L1218.7,180.7L1219.4,197.5L1219.8,222.7L1220.5,222.7L1220.9,180.7L1221.6,231.1L1221.9,231.1L1222.3,180.7L1222.7,231.1L1223.4,264.7L1223.7,222.7L1224.4,205.9L1224.8,247.9L1225.1,214.3L1225.9,222.7L1226.2,247.9L1226.9,247.9L1227.3,231.1L1227.6,214.3L1228.4,222.7L1229.1,214.3L1229.4,222.7L1229.8,231.1L1230.1,222.7L1230.9,256.3L1231.2,239.5L1231.9,247.9L1232.3,239.5L1232.6,247.9L1233.3,231.1L1233.7,205.9L1234.4,231.1L1234.8,214.3L1235.1,205.9L1235.8,256.3L1236.2,197.5L1236.9,239.5L1237.3,214.3L1237.6,256.3L1238.3,231.1L1238.7,239.5L1239.1,172.3L1239.8,231.1L1240.5,197.5L1240.8,214.3L1241.2,214.3L1241.9,180.7L1242.3,256.3L1242.6,214.3L1243.3,189.1L1243.7,214.3L1244.0,264.7L1244.8,231.1L1245.1,247.9L1245.8,214.3L1246.2,180.7L1246.5,256.3L1247.3,222.7L1247.6,239.5L1248.0,205.9L1248.7,214.3L1249.0,214.3L1249.7,155.5L1250.1,222.7L1250.5,231.1L1251.2,239.5L1251.9,222.7L1252.2,256.3L1252.6,197.5L1253.0,247.9L1253.7,180.7L1254.0,214.3L1254.7,222.7L1255.1,189.1L1255.8,239.5L1256.2,197.5L1256.9,189.1L1257.2,222.7L1257.6,205.9L1258.3,231.1L1258.7,239.5L1259.0,197.5L1259.4,239.5L1260.1,239.5L1260.8,189.1L1261.2,239.5L1261.5,222.7L1261.9,247.9L1262.6,197.5L1263.3,256.3L1263.7,222.7L1264.0,239.5L1264.4,222.7L1265.1,222.7L1265.4,239.5L1266.1,247.9L1266.5,231.1L1267.2,205.9L1267.6,214.3L1267.9,189.1L1268.6,231.1L1269.0,205.9L1269.4,231.1L1270.1,222.7L1270.4,239.5L1271.1,197.5L1271.5,247.9L1271.9,214.3L1272.6,205.9L1272.9,231.1L1273.6,180.7L1274.0,239.5L1274.3,222.7L1275.1,222.7L1275.4,205.9L1276.1,222.7L1276.5,214.3L1276.8,247.9L1277.6,189.1L1277.9,231.1L1278.6,189.1L1279.0,180.7L1279.3,197.5L1280.0,239.5L1280.4,247.9L1280.8,189.1L1281.5,231.1L1282.2,180.7L1282.5,231.1L1282.9,214.3L1283.6,180.7L1284.0,256.3L1284.3,197.5L1285.0,222.7L1285.4,214.3L1285.8,197.5L1286.5,231.1L1286.8,205.9L1287.2,239.5L1287.9,172.3L1288.6,256.3L1289.0,231.1L1289.3,214.3L1290.0,239.5L1290.4,214.3L1291.1,231.1L1291.5,231.1L1291.8,197.5L1292.5,239.5L1292.9,264.7L1293.6,205.9L1294.0,239.5L1294.3,180.7L1295.0,231.1L1295.4,231.1L1295.7,180.7L1296.1,239.5L1296.8,231.1L1297.5,189.1L1297.9,239.5L1298.2,214.3L1298.9,172.3L1299.3,239.5L1299.7,205.9L1300.4,197.5L1300.7,231.1L1301.1,205.9L1301.8,222.7L1302.2,239.5L1302.9,222.7L1303.2,222.7L1303.9,264.7L1304.3,189.1L1304.6,222.7L1305.4,214.3L1305.7,197.5L1306.1,189.1L1306.8,189.1L1307.1,247.9" fill="none" stroke="#a6cee3" stroke-width="1.9" stroke-opacity="1.0" stroke-linejoin="bevel"/><path d="M794.5,281.5L794.9,256.3L795.2,273.1L795.9,222.7L796.6,247.9L797.7,264.7L798.4,247.9L799.1,256.3L799.8,273.1L800.6,256.3L801.3,239.5L802.3,256.3L802.7,239.5L804.1,273.1L804.5,256.3L805.2,231.1L806.3,264.7L807.3,256.3L807.7,247.9L808.4,273.1L809.5,239.5L809.8,247.9L810.9,214.3L812.0,281.5L812.3,247.9L813.0,222.7L813.8,247.9L814.5,239.5L815.5,264.7L816.6,256.3L817.0,239.5L818.0,273.1L818.7,239.5L819.5,264.7L820.2,189.1L820.9,273.1L822.0,231.1L822.3,256.3L823.0,264.7L823.7,256.3L825.2,222.7L825.5,256.3L826.2,231.1L826.9,273.1L828.0,256.3L828.7,205.9L829.8,273.1L830.1,256.3L830.9,281.5L831.9,247.9L833.0,264.7L833.4,256.3L834.4,231.1L834.8,247.9L835.5,214.3L836.6,273.1L836.9,247.9L838.0,239.5L838.7,273.1L839.4,256.3L840.1,239.5L840.8,256.3L842.3,264.7L843.0,256.3L843.7,231.1L844.1,256.3L845.1,273.1L845.5,231.1L846.5,273.1L847.3,239.5L848.3,264.7L849.0,273.1L850.1,239.5L850.5,222.7L851.2,264.7L851.9,256.3L852.6,239.5L853.3,281.5L854.0,231.1L855.1,214.3L856.2,247.9L856.9,214.3L857.2,264.7L858.0,256.3L858.7,231.1L859.7,205.9L860.5,273.1L861.5,247.9L862.2,273.1L863.3,231.1L864.0,273.1L864.4,256.3L865.4,239.5L865.8,247.9L866.5,231.1L867.6,264.7L868.7,247.9L869.4,264.7L870.1,247.9L870.8,222.7L871.1,264.7L872.2,247.9L872.9,256.3L874.0,222.7L874.4,273.1L875.1,239.5L876.1,256.3L876.9,273.1L877.6,256.3L878.6,239.5L879.3,256.3L880.4,214.3L880.8,281.5L881.5,264.7L882.2,264.7L882.9,281.5L883.6,239.5L884.3,264.7L885.4,247.9L886.1,256.3L887.2,222.7L887.5,247.9L888.3,264.7L889.3,247.9L890.0,264.7L890.8,247.9L891.8,222.7L892.2,264.7L892.9,239.5L894.0,273.1L895.0,247.9L895.4,239.5L896.5,273.1L896.8,231.1L897.9,264.7L898.6,256.3L899.3,222.7L900.4,256.3L900.7,264.7L901.8,281.5L902.9,247.9L903.2,214.3L903.9,256.3L905.0,239.5L905.7,256.3L906.4,239.5L907.5,256.3L908.2,247.9L908.6,214.3L909.3,256.3L910.7,239.5L911.4,264.7L912.1,231.1L912.5,273.1L913.2,256.3L913.9,281.5L914.6,239.5L916.1,247.9L916.4,231.1L917.1,264.7L917.8,281.5L919.3,239.5L919.6,273.1L920.7,247.9L921.1,214.3L922.1,273.1L922.5,247.9L923.6,256.3L924.6,247.9L925.3,273.1L925.7,239.5L926.4,264.7L927.8,222.7L928.2,264.7L928.9,264.7L929.6,239.5L930.7,256.3L931.0,264.7L931.8,231.1L932.8,264.7L933.9,281.5L934.2,214.3L935.0,247.9L935.7,222.7L936.7,247.9L937.5,273.1L938.5,256.3L939.2,273.1L939.6,239.5L940.3,264.7L941.7,247.9L942.1,256.3L942.8,273.1L943.9,239.5L944.2,264.7L945.3,256.3L946.4,273.1L947.1,247.9L947.8,205.9L948.5,239.5L948.9,264.7L949.9,231.1L951.0,256.3L951.7,231.1L952.4,256.3L952.8,247.9L953.9,264.7L954.9,222.7L955.6,247.9L956.0,239.5L957.1,273.1L958.1,247.9L958.5,273.1L959.2,264.7L959.9,214.3L960.6,273.1L962.1,239.5L962.4,281.5L963.5,264.7L963.8,239.5L964.9,264.7L965.3,256.3L966.7,231.1L967.4,281.5L967.8,214.3L968.5,256.3L969.2,264.7L969.9,273.1L971.0,239.5L971.7,264.7L972.7,256.3L973.5,231.1L973.8,264.7L974.9,231.1L975.6,264.7L976.3,256.3L977.4,222.7L977.7,273.1L978.5,264.7L979.9,247.9L980.6,256.3L980.9,264.7L981.7,231.1L982.4,264.7L983.4,247.9L984.5,239.5L984.9,256.3L985.6,247.9L986.3,247.9L987.0,264.7L987.7,239.5L989.1,247.9L989.5,273.1L990.2,256.3L990.9,239.5L992.4,281.5L993.1,197.5L993.4,256.3L994.1,239.5L994.9,273.1L995.9,239.5L996.6,256.3L997.7,281.5L998.1,239.5L998.8,273.1L999.8,205.9L1000.2,264.7L1001.6,231.1L1002.0,273.1L1003.1,231.1L1003.8,273.1L1004.1,231.1L1005.5,264.7L1006.3,247.9L1007.0,264.7L1007.3,239.5L1008.4,256.3L1009.5,247.9L1010.2,231.1L1010.5,256.3L1011.3,239.5L1012.3,264.7L1012.7,273.1L1013.7,247.9L1014.8,281.5L1015.5,222.7L1016.2,256.3L1016.6,239.5L1018.0,264.7L1018.4,256.3L1019.4,273.1L1020.2,231.1L1020.5,231.1L1021.2,247.9L1022.3,264.7L1023.0,214.3L1024.1,256.3L1024.8,222.7L1025.2,264.7L1025.9,239.5L1026.9,247.9L1028.0,264.7L1028.4,239.5L1029.1,264.7L1030.1,239.5L1030.5,264.7L1031.6,239.5L1032.6,256.3L1033.4,239.5L1033.7,231.1L1034.8,264.7L1035.8,239.5L1036.6,273.1L1036.9,222.7L1037.6,264.7L1038.3,264.7L1039.4,247.9L1040.1,273.1L1040.8,239.5L1041.6,256.3L1042.6,239.5L1043.0,247.9L1044.0,264.7L1044.8,239.5L1045.5,264.7L1046.5,239.5L1047.3,256.3L1047.6,231.1L1048.7,256.3L1049.4,222.7L1050.5,256.3L1050.8,239.5L1051.9,222.7L1053.0,281.5L1053.3,239.5L1054.0,281.5L1055.1,239.5L1055.8,256.3L1056.2,239.5L1057.2,264.7L1058.0,205.9L1059.0,264.7L1059.4,256.3L1060.1,231.1L1061.2,264.7L1061.9,239.5L1062.9,273.1L1063.7,205.9L1064.0,239.5L1065.1,281.5L1066.2,256.3L1066.9,222.7L1067.2,273.1L1067.9,256.3L1069.0,264.7L1069.4,231.1L1070.8,264.7L1071.1,256.3L1071.9,256.3L1072.6,239.5L1073.3,247.9L1074.4,247.9L1075.1,222.7L1075.8,256.3L1076.8,205.9L1077.2,264.7L1078.3,239.5L1079.0,264.7L1080.1,239.5L1080.8,256.3L1081.5,239.5L1082.6,264.7L1083.3,231.1L1083.6,264.7L1084.7,247.9L1085.4,205.9L1085.8,264.7L1086.8,239.5L1087.5,264.7L1088.3,239.5L1089.0,264.7L1090.0,222.7L1090.7,281.5L1091.1,214.3L1092.2,264.7L1092.9,264.7L1093.6,247.9L1094.3,264.7L1095.4,222.7L1096.5,264.7L1096.8,247.9L1097.5,273.1L1098.6,247.9L1098.9,247.9L1100.4,222.7L1101.1,247.9L1101.4,273.1L1102.5,256.3L1103.2,273.1L1103.6,247.9L1104.7,239.5L1105.4,256.3L1106.1,273.1L1106.8,231.1L1107.5,231.1L1108.6,264.7L1109.3,264.7L1110.0,256.3L1110.7,247.9L1111.4,256.3L1112.5,239.5L1113.2,264.7L1113.9,273.1L1115.0,247.9L1115.3,264.7L1116.4,239.5L1116.8,256.3L1117.8,264.7L1118.6,214.3L1119.3,281.5L1120.0,239.5L1121.1,264.7L1121.8,222.7L1122.5,247.9L1123.5,231.1L1123.9,264.7L1124.6,247.9L1125.7,273.1L1126.8,239.5L1127.5,273.1L1127.8,256.3L1128.9,222.7L1129.3,256.3L1130.3,239.5L1131.0,256.3L1131.7,281.5L1132.5,239.5L1133.5,273.1L1134.2,222.7L1135.0,256.3L1135.7,247.9L1136.4,214.3L1137.1,264.7L1138.5,239.5L1139.2,264.7L1139.6,273.1L1140.7,239.5L1141.0,264.7L1141.7,222.7L1142.4,264.7L1143.9,189.1L1144.6,247.9L1144.9,256.3L1146.0,264.7L1146.7,273.1" fill="none" stroke="#33a02c" stroke-width="1.7" stroke-opacity="0.99" stroke-linejoin="bevel"/><path d="M1147.1,256.3L1147.1,256.3L1147.4,239.5L1148.1,273.1L1148.5,247.9L1148.9,273.1L1149.2,231.1L1149.9,264.7L1150.6,239.5L1151.0,231.1L1151.4,247.9L1151.7,214.3L1152.4,222.7L1152.8,264.7L1153.5,256.3L1153.8,231.1L1154.2,264.7L1154.9,239.5L1155.6,264.7L1156.0,231.1L1156.3,222.7L1156.7,281.5L1157.4,231.1L1158.1,247.9L1158.5,239.5L1158.8,239.5L1159.6,273.1L1159.9,247.9L1160.3,256.3L1160.6,264.7L1161.3,247.9L1161.7,256.3L1162.4,247.9L1162.8,264.7L1163.5,222.7L1163.8,231.1L1164.5,264.7L1164.9,256.3L1165.3,222.7L1165.6,256.3L1166.3,264.7L1167.0,231.1L1167.4,239.5L1167.8,247.9L1168.5,273.1L1168.8,256.3L1169.2,231.1L1169.9,273.1L1170.2,205.9L1170.6,264.7L1171.3,273.1L1171.7,222.7L1172.4,281.5L1172.7,256.3L1173.5,281.5L1173.8,247.9L1174.2,247.9L1174.9,264.7L1175.2,214.3L1176.0,264.7L1176.3,247.9L1176.7,264.7L1177.0,264.7L1177.7,247.9L1178.1,256.3L1178.8,256.3L1179.2,231.1L1179.9,256.3L1180.2,197.5L1180.9,273.1L1181.3,231.1L1181.7,264.7L1182.0,273.1L1182.7,264.7L1183.4,281.5L1183.8,247.9L1184.2,264.7L1184.5,231.1L1185.2,239.5L1185.6,264.7L1185.9,239.5L1186.6,273.1L1187.0,214.3L1187.7,239.5L1188.1,256.3L1188.4,222.7L1189.1,264.7L1189.5,281.5L1190.2,247.9L1190.6,256.3L1190.9,264.7L1191.6,264.7L1192.0,273.1L1192.7,264.7L1193.1,231.1L1193.4,247.9L1194.1,239.5L1194.8,273.1L1195.2,239.5L1195.6,256.3L1195.9,264.7L1196.6,247.9L1197.0,247.9L1197.3,264.7L1198.1,197.5L1198.8,273.1L1199.1,256.3L1199.5,239.5L1199.8,264.7L1200.6,247.9L1200.9,273.1L1201.6,256.3L1202.0,264.7L1202.3,231.1L1203.0,247.9L1203.8,273.1L1204.1,231.1L1204.5,231.1L1204.8,256.3L1205.5,247.9L1206.3,264.7L1206.6,264.7L1207.0,239.5L1207.7,264.7L1208.0,273.1L1208.4,222.7L1208.8,273.1L1209.5,214.3L1210.2,264.7L1210.5,256.3L1210.9,264.7L1211.6,247.9L1212.0,239.5L1212.3,273.1L1213.0,256.3L1213.4,247.9L1213.7,264.7L1214.5,247.9L1215.2,273.1L1215.5,231.1L1215.9,239.5L1216.6,256.3L1216.9,256.3L1217.3,256.3L1218.0,239.5L1218.4,281.5L1219.1,222.7L1219.4,256.3L1219.8,239.5L1220.5,247.9L1220.9,239.5L1221.2,264.7L1221.9,264.7L1222.3,264.7L1223.0,256.3L1223.4,247.9L1223.7,256.3L1224.4,256.3L1224.8,264.7L1225.5,256.3L1225.9,222.7L1226.2,247.9L1226.9,231.1L1227.3,264.7L1228.0,205.9L1228.4,231.1L1228.7,264.7L1229.4,256.3L1229.8,256.3L1230.5,205.9L1230.9,256.3L1231.6,214.3L1231.9,231.1L1232.3,264.7L1233.0,239.5L1233.3,264.7L1233.7,247.9L1234.4,281.5L1234.8,273.1L1235.1,247.9L1235.8,264.7L1236.2,264.7L1236.9,247.9L1237.3,214.3L1237.6,273.1L1238.3,239.5L1238.7,264.7L1239.1,247.9L1239.8,256.3L1240.1,247.9L1240.8,264.7L1241.2,231.1L1241.5,264.7L1242.3,256.3L1242.6,264.7L1243.3,256.3L1243.7,256.3L1244.0,247.9L1244.8,256.3L1245.1,273.1L1245.8,231.1L1246.2,256.3L1246.5,264.7L1247.3,231.1L1247.6,256.3L1248.3,239.5L1248.7,247.9L1249.0,231.1L1249.7,247.9L1250.1,256.3L1250.5,247.9L1251.2,264.7L1251.5,281.5L1252.2,247.9L1252.6,256.3L1253.0,256.3L1253.7,256.3L1254.4,239.5L1254.7,247.9L1255.1,239.5L1255.5,247.9L1256.2,256.3L1256.5,247.9L1257.2,264.7L1257.6,231.1L1258.3,247.9L1258.7,256.3L1259.0,222.7L1259.7,239.5L1260.1,214.3L1260.4,247.9L1261.2,256.3L1261.5,264.7L1262.2,214.3L1262.6,264.7L1262.9,273.1L1263.7,247.9L1264.0,247.9L1264.4,247.9L1265.1,239.5L1265.8,222.7L1266.1,222.7L1266.5,256.3L1266.9,264.7L1267.6,231.1L1267.9,273.1L1268.6,256.3L1269.0,256.3L1269.4,239.5L1270.1,256.3L1270.4,247.9L1271.1,264.7L1271.5,231.1L1271.9,264.7L1272.6,256.3L1272.9,247.9L1273.3,239.5L1274.0,256.3L1274.7,273.1L1275.1,281.5L1275.4,247.9L1275.8,273.1L1276.5,256.3L1276.8,222.7L1277.6,205.9L1277.9,247.9L1278.6,214.3L1279.0,247.9L1279.7,273.1L1280.0,256.3L1280.4,239.5L1280.8,264.7L1281.5,247.9L1281.8,239.5L1282.5,239.5L1282.9,256.3L1283.3,247.9L1284.0,264.7L1284.3,273.1L1284.7,264.7L1285.4,247.9L1285.8,273.1L1286.5,264.7L1286.8,239.5L1287.5,264.7L1287.9,239.5L1288.6,256.3L1289.0,281.5L1289.3,264.7L1289.7,239.5L1290.4,281.5L1290.7,239.5L1291.5,273.1L1291.8,239.5L1292.2,231.1L1292.9,247.9L1293.2,273.1L1294.0,247.9L1294.3,273.1L1295.0,256.3L1295.4,264.7L1295.7,256.3L1296.4,239.5L1296.8,264.7L1297.2,281.5L1297.9,256.3L1298.2,256.3L1298.9,222.7L1299.3,273.1L1299.7,247.9L1300.4,247.9L1300.7,264.7L1301.1,239.5L1301.8,214.3L1302.5,264.7L1302.9,273.1L1303.2,273.1L1303.9,247.9L1304.3,264.7L1305.0,247.9L1305.4,256.3L1305.7,247.9L1306.1,256.3L1306.8,256.3L1307.1,239.5" fill="none" stroke="#33a02c" stroke-width="1.9" stroke-opacity="1.0" stroke-linejoin="bevel"/><path d="M794.5,281.5L1154.4,281.5L1154.4,273.1L1155.0,273.1L1155.0,281.5L1257.7,281.5L1257.7,273.1L1258.3,273.1L1258.3,281.5L1308.0,281.5" fill="none" stroke="#1f78b4" stroke-width="1.3" stroke-linejoin="miter"/><circle cx="1328" cy="111" r="5" fill="#1f78b4"/><text x="1338" y="116" fill="#dfe5ec">${reqHost}</text><circle cx="1328" cy="129" r="5" fill="#a6cee3"/><text x="1338" y="134" fill="#dfe5ec">www.acmeco.com</text><circle cx="1328" cy="147" r="5" fill="#33a02c"/><text x="1338" y="152" fill="#dfe5ec">www2.acmeco.com</text></svg></div><div class="panel" style="left:12px;top:329px"><div class="pt sm">Top Warn Rules</div><div class="tbl"><div class="row h" style="top:0"><span style="left:31px">warn_rule</span><span style="right:23px">Count</span><i class="sep" style="left:627px"></i></div><div class="row" style="top:23px"><span class="n" style="left:4.25px">1</span><span style="left:31px">605082</span><span class="m" style="right:8px">9,467</span></div><div class="row" style="top:46px"><span class="n" style="left:4.25px">2</span><span style="left:31px">990011</span><span class="m" style="right:8px">7,556</span></div><div class="row" style="top:69px"><span class="n" style="left:4.25px">3</span><span style="left:31px">990012</span><span class="m" style="right:8px">5,509</span></div><div class="row" style="top:92px"><span class="n" style="left:4.25px">4</span><span style="left:31px">602746</span><span class="m" style="right:8px">1,900</span></div><div class="row" style="top:115px"><span class="n" style="left:4.25px">5</span><span style="left:31px">601426</span><span class="m" style="right:8px">1,890</span></div><div class="row" style="top:138px"><span class="n" style="left:4.25px">6</span><span style="left:31px">959006</span><span class="m" style="right:8px">1,886</span></div><div class="row" style="top:161px"><span class="n" style="left:4.25px">7</span><span style="left:31px">605121</span><span class="m" style="right:8px">909</span></div><div class="row" style="top:184px"><span class="n" style="left:4.25px">8</span><span style="left:31px">warn</span><span class="m" style="right:8px">4</span></div></div></div><div class="panel" style="left:754px;top:329px"><div class="pt sm">Top Deny Rules</div><div class="tbl"><div class="row h" style="top:0"><span style="left:31px">deny</span><span style="right:8px">deny_count</span><i class="sep" style="left:606px"></i></div><div class="row" style="top:23px"><span class="n" style="left:4.25px">1</span><span style="left:31px">605077</span><span class="m" style="right:8px">7,427</span></div><div class="row" style="top:46px"><span class="n" style="left:4.25px">2</span><span style="left:31px">605078</span><span class="m" style="right:8px">5,665</span></div><div class="row" style="top:69px"><span class="n" style="left:4.25px">3</span><span style="left:31px">605076</span><span class="m" style="right:8px">1,973</span></div><div class="row" style="top:92px"><span class="n" style="left:4.25px">4</span><span style="left:31px">${deny}</span><span class="m" style="right:8px">4</span></div></div></div><div class="panel" style="left:12px;top:587px"><div class="pt sm">Top Warn URLs</div><div class="tbl"><div class="row h" style="top:0"><span style="left:37px">path</span><span style="right:183px">warn_count</span><i class="sep" style="left:431px"></i><span style="right:23px">percent</span><i class="sep" style="left:533px"></i></div><div class="row" style="top:23px"><span class="n" style="left:7.25px">1</span><span style="left:37px">/browse</span><span class="m" style="right:168px">17,687</span><span class="m" style="right:8px">60.73623845334981</span></div><div class="row" style="top:46px"><span class="n" style="left:7.25px">2</span><span style="left:37px">/</span><span class="m" style="right:168px">3,851</span><span class="m" style="right:8px">13.22413378661447</span></div><div class="row" style="top:69px"><span class="n" style="left:7.25px">3</span><span style="left:37px">/support</span><span class="m" style="right:168px">3,030</span><span class="m" style="right:8px">10.404862470382199</span></div><div class="row" style="top:92px"><span class="n" style="left:7.25px">4</span><span style="left:37px">/cart?display=full</span><span class="m" style="right:168px">1,995</span><span class="m" style="right:8px">6.850726280004121</span></div><div class="row" style="top:115px"><span class="n" style="left:7.25px">5</span><span style="left:37px">/products</span><span class="m" style="right:168px">663</span><span class="m" style="right:8px">2.276707530647986</span></div><div class="row" style="top:138px"><span class="n" style="left:7.25px">6</span><span style="left:37px">/solutions</span><span class="m" style="right:168px">520</span><span class="m" style="right:8px">1.7856529652141067</span></div><div class="row" style="top:161px"><span class="n" style="left:7.25px">7</span><span style="left:37px">/aboutus</span><span class="m" style="right:168px">507</span><span class="m" style="right:8px">1.7410116410837542</span></div><div class="row" style="top:184px"><span class="n" style="left:7.25px">8</span><span style="left:37px">/jobs</span><span class="m" style="right:168px">408</span><span class="m" style="right:8px">1.4010507880910683</span></div></div></div><div class="panel" style="left:754px;top:587px"><div class="pt sm">Top Deny URLs</div><div class="tbl"><div class="row h" style="top:0"><span style="left:37px">path</span><span style="right:183px">deny_count</span><i class="sep" style="left:431px"></i><span style="right:23px">percent</span><i class="sep" style="left:533px"></i></div><div class="row" style="top:23px"><span class="n" style="left:7.25px">1</span><span style="left:37px">/browse</span><span class="m" style="right:168px">9,274</span><span class="m" style="right:8px">61.543566261862104</span></div><div class="row" style="top:46px"><span class="n" style="left:7.25px">2</span><span style="left:37px">/</span><span class="m" style="right:168px">1,929</span><span class="m" style="right:8px">12.801114871590682</span></div><div class="row" style="top:69px"><span class="n" style="left:7.25px">3</span><span style="left:37px">/support</span><span class="m" style="right:168px">1,472</span><span class="m" style="right:8px">9.768398699316478</span></div><div class="row" style="top:92px"><span class="n" style="left:7.25px">4</span><span style="left:37px">/cart?display=full</span><span class="m" style="right:168px">1,058</span><span class="m" style="right:8px">7.021036565133717</span></div><div class="row" style="top:115px"><span class="n" style="left:7.25px">5</span><span style="left:37px">/products</span><span class="m" style="right:168px">339</span><span class="m" style="right:8px">2.2496516026279116</span></div><div class="row" style="top:138px"><span class="n" style="left:7.25px">6</span><span style="left:37px">/solutions</span><span class="m" style="right:168px">272</span><span class="m" style="right:8px">1.8050301944389144</span></div><div class="row" style="top:161px"><span class="n" style="left:7.25px">7</span><span style="left:37px">/aboutus</span><span class="m" style="right:168px">268</span><span class="m" style="right:8px">1.778485632755989</span></div><div class="row" style="top:184px"><span class="n" style="left:7.25px">8</span><span style="left:37px">/jobs</span><span class="m" style="right:168px">229</span><span class="m" style="right:8px">1.5196761563474683</span></div></div></div></div></body></html>
